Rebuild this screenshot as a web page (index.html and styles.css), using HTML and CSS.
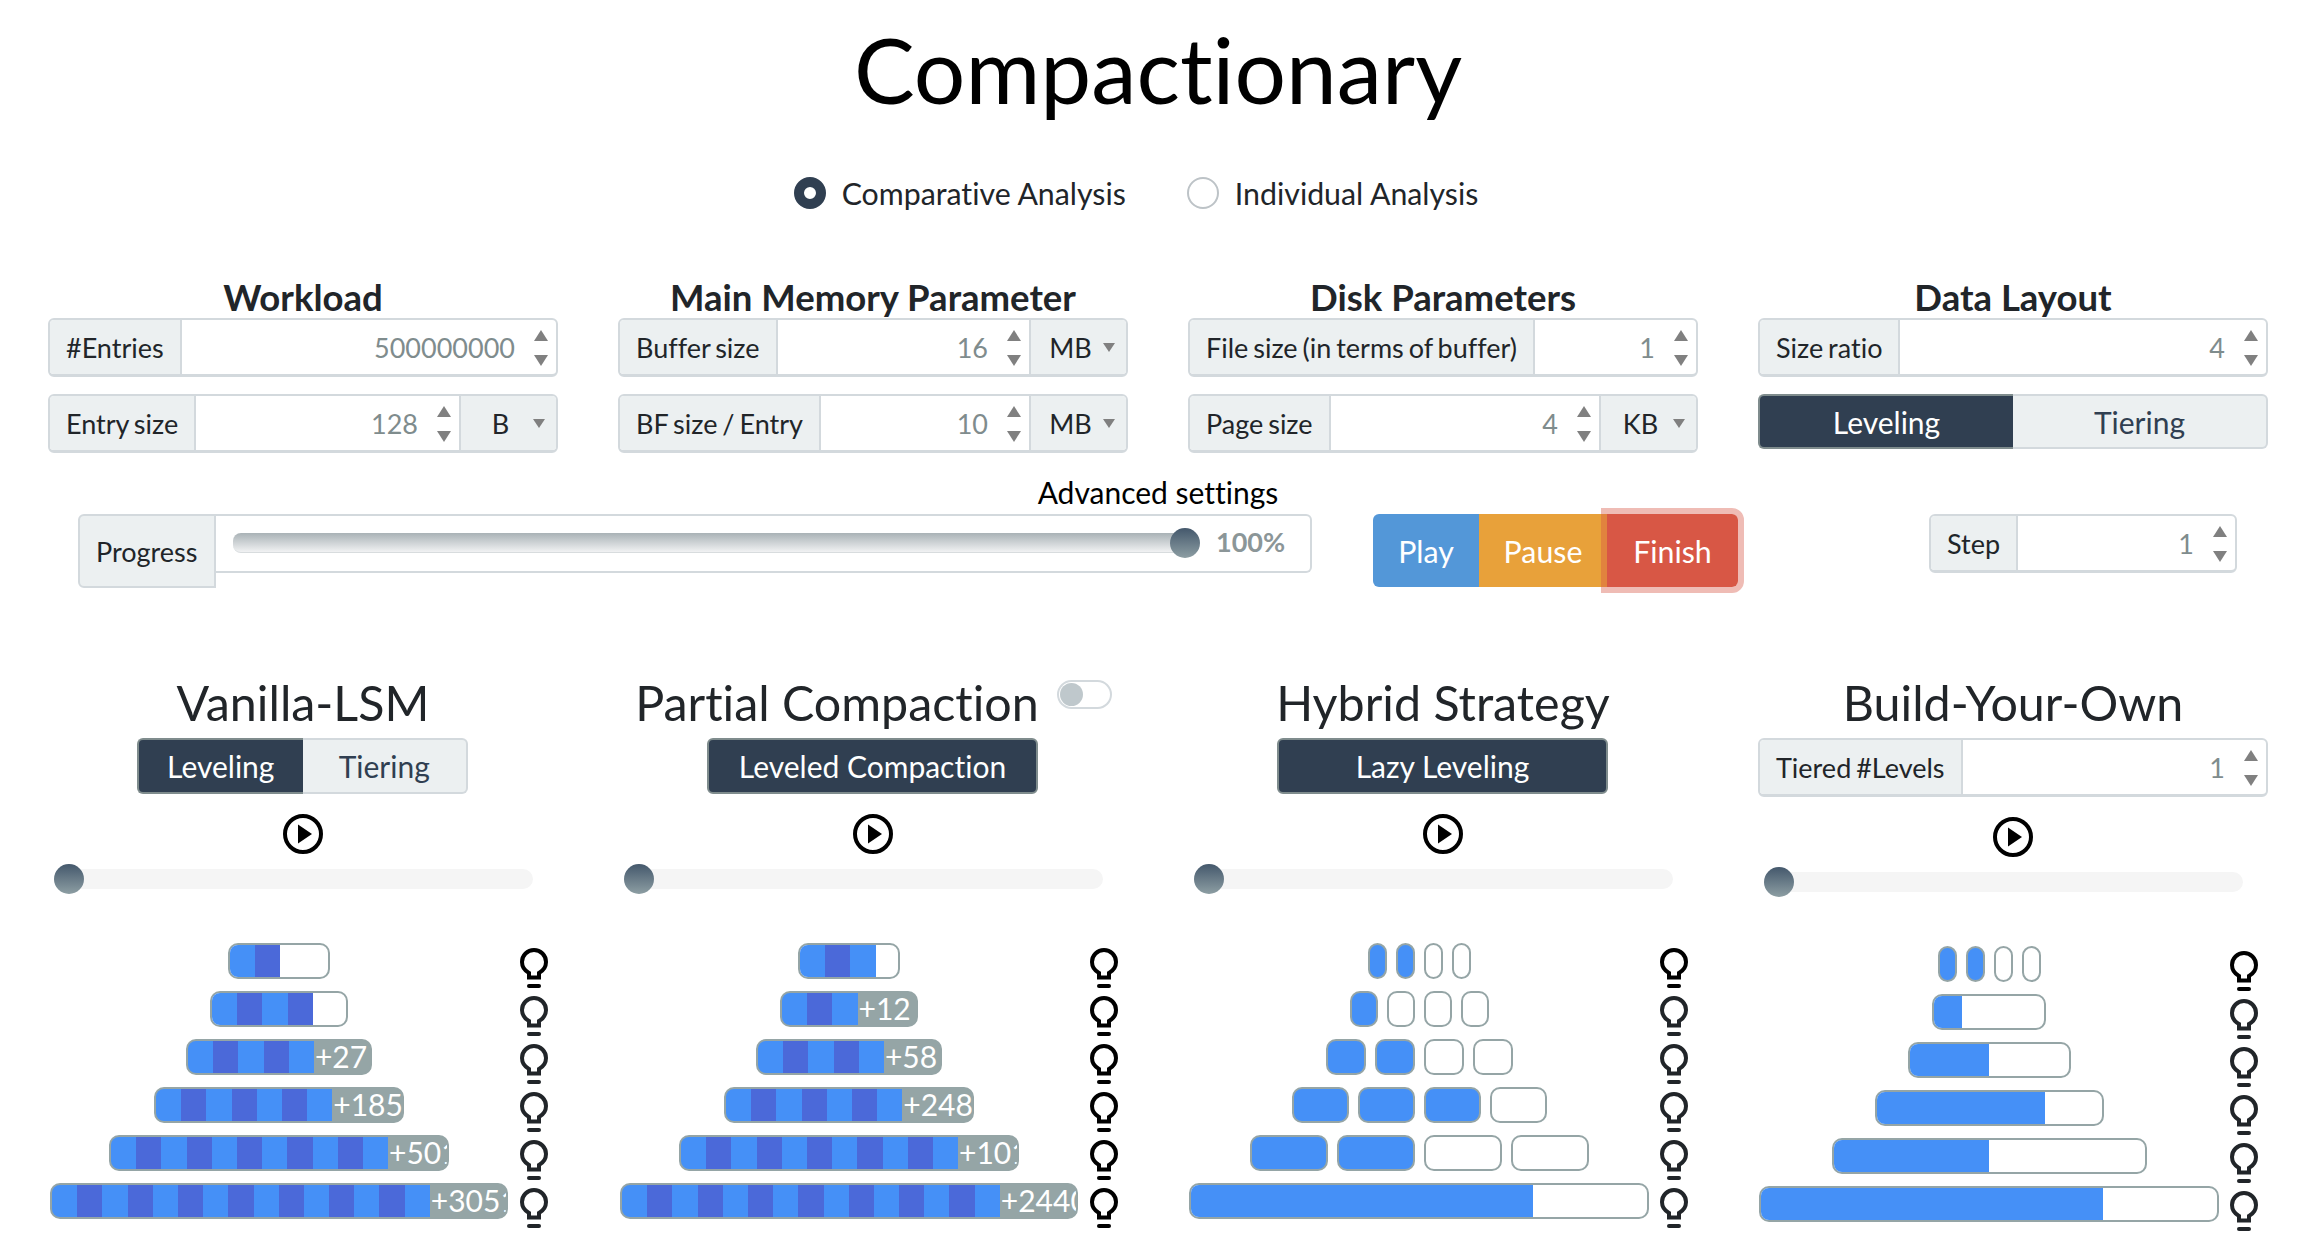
FILE: index.html
```html
<!DOCTYPE html>
<html lang="en">
<head>
  <meta charset="UTF-8">
  <title>Compactionary</title>
  <link rel="stylesheet" href="styles.css">
</head>
<body>
  <svg class="defs" width="0" height="0">
    <symbol id="bulb" viewBox="0 0 28 40">
      <path d="M9 29.5V25C4.5 22.5 2 18.500 2 14a12 12 0 0 1 24 0c0 4.500-2.500 8.500-7 11v4.500z" fill="none" stroke="currentColor" stroke-width="4"/>
      <path d="M9 38h10" fill="none" stroke="currentColor" stroke-width="4" stroke-linecap="round"/>
    </symbol>
    <symbol id="play" viewBox="0 0 40 40">
      <circle cx="20" cy="20" r="18" fill="none" stroke="currentColor" stroke-width="4"/>
      <path d="M15 10.500 29 20 15 29.500z" fill="currentColor"/>
    </symbol>
  </svg>

  <h1 class="title">Compactionary</h1>

  <div class="modes">
    <label class="mode"><span class="radio on"></span>Comparative Analysis</label>
    <label class="mode"><span class="radio"></span>Individual Analysis</label>
  </div>

  <!-- parameters -->
  <div class="grid params">
    <section class="col">
      <h3>Workload</h3>
      <div class="group">
        <span class="addon">#Entries</span>
        <div class="num">500000000</div>
        <span class="spin"></span>
      </div>
      <div class="group">
        <span class="addon">Entry size</span>
        <div class="num">128</div>
        <span class="spin"></span>
        <span class="unit">B</span>
      </div>
    </section>
    <section class="col">
      <h3>Main Memory Parameter</h3>
      <div class="group">
        <span class="addon">Buffer size</span>
        <div class="num">16</div>
        <span class="spin"></span>
        <span class="unit">MB</span>
      </div>
      <div class="group">
        <span class="addon">BF size / Entry</span>
        <div class="num">10</div>
        <span class="spin"></span>
        <span class="unit">MB</span>
      </div>
    </section>
    <section class="col">
      <h3>Disk Parameters</h3>
      <div class="group">
        <span class="addon">File size (in terms of buffer)</span>
        <div class="num">1</div>
        <span class="spin"></span>
      </div>
      <div class="group">
        <span class="addon">Page size</span>
        <div class="num">4</div>
        <span class="spin"></span>
        <span class="unit">KB</span>
      </div>
    </section>
    <section class="col">
      <h3>Data Layout</h3>
      <div class="group">
        <span class="addon">Size ratio</span>
        <div class="num">4</div>
        <span class="spin"></span>
      </div>
      <div class="toggle wide">
        <button class="active">Leveling</button>
        <button>Tiering</button>
      </div>
    </section>
  </div>

  <div class="advanced-title">Advanced settings</div>

  <div class="advanced">
    <div class="progress">
      <span class="addon progress-label">Progress</span>
      <div class="progress-body">
        <div class="progress-track"><span class="progress-thumb"></span></div>
        <span class="percent">100%</span>
      </div>
    </div>
    <div class="actions">
      <button class="play">Play</button>
      <button class="pause">Pause</button>
      <button class="finish">Finish</button>
    </div>
    <div class="group step">
      <span class="addon">Step</span>
      <div class="num">1</div>
      <span class="spin"></span>
    </div>
  </div>

  <!-- strategies -->
  <div class="grid cards">
    <section class="col">
      <h2>Vanilla-LSM</h2>
      <div class="toggle">
        <button class="active">Leveling</button>
        <button>Tiering</button>
      </div>
      <svg class="play-icon"><use href="#play"/></svg>
      <div class="slider"><span class="slider-thumb"></span></div>
      <div class="tree">
        <div class="level"><div class="slot"><div class="bar w1"><i></i><i></i></div></div><svg class="bulb lit"><use href="#bulb"/></svg></div>
        <div class="level"><div class="slot"><div class="bar w2"><i></i><i></i><i></i><i></i></div></div><svg class="bulb"><use href="#bulb"/></svg></div>
        <div class="level"><div class="slot"><div class="bar w3 more"><i></i><i></i><i></i><i></i><i></i><b>+27</b></div></div><svg class="bulb"><use href="#bulb"/></svg></div>
        <div class="level"><div class="slot"><div class="bar w4 more"><i></i><i></i><i></i><i></i><i></i><i></i><i></i><b>+185</b></div></div><svg class="bulb"><use href="#bulb"/></svg></div>
        <div class="level"><div class="slot"><div class="bar w5 more"><i></i><i></i><i></i><i></i><i></i><i></i><i></i><i></i><i></i><i></i><i></i><b>+501</b></div></div><svg class="bulb"><use href="#bulb"/></svg></div>
        <div class="level"><div class="slot"><div class="bar w6 more"><i></i><i></i><i></i><i></i><i></i><i></i><i></i><i></i><i></i><i></i><i></i><i></i><i></i><i></i><i></i><b>+3051</b></div></div><svg class="bulb"><use href="#bulb"/></svg></div>
      </div>
    </section>

    <section class="col">
      <h2 class="with-switch">Partial Compaction<span class="switch"></span></h2>
      <div class="toggle"><button class="active">Leveled Compaction</button></div>
      <svg class="play-icon"><use href="#play"/></svg>
      <div class="slider"><span class="slider-thumb"></span></div>
      <div class="tree">
        <div class="level"><div class="slot"><div class="bar w1"><i></i><i></i><i></i></div></div><svg class="bulb lit"><use href="#bulb"/></svg></div>
        <div class="level"><div class="slot"><div class="bar w2 more"><i></i><i></i><i></i><b>+12</b></div></div><svg class="bulb lit"><use href="#bulb"/></svg></div>
        <div class="level"><div class="slot"><div class="bar w3 more"><i></i><i></i><i></i><i></i><i></i><b>+58</b></div></div><svg class="bulb lit"><use href="#bulb"/></svg></div>
        <div class="level"><div class="slot"><div class="bar w4 more"><i></i><i></i><i></i><i></i><i></i><i></i><i></i><b>+248</b></div></div><svg class="bulb lit"><use href="#bulb"/></svg></div>
        <div class="level"><div class="slot"><div class="bar w5 more"><i></i><i></i><i></i><i></i><i></i><i></i><i></i><i></i><i></i><i></i><i></i><b>+101</b></div></div><svg class="bulb lit"><use href="#bulb"/></svg></div>
        <div class="level"><div class="slot"><div class="bar w6 more"><i></i><i></i><i></i><i></i><i></i><i></i><i></i><i></i><i></i><i></i><i></i><i></i><i></i><i></i><i></i><b>+2440</b></div></div><svg class="bulb lit"><use href="#bulb"/></svg></div>
      </div>
    </section>

    <section class="col">
      <h2>Hybrid Strategy</h2>
      <div class="toggle"><button class="active">Lazy Leveling</button></div>
      <svg class="play-icon"><use href="#play"/></svg>
      <div class="slider"><span class="slider-thumb"></span></div>
      <div class="tree">
        <div class="level"><div class="slot runs r1"><u class="full"></u><u class="full"></u><u></u><u></u></div><svg class="bulb lit"><use href="#bulb"/></svg></div>
        <div class="level"><div class="slot runs r2"><u class="full"></u><u></u><u></u><u></u></div><svg class="bulb"><use href="#bulb"/></svg></div>
        <div class="level"><div class="slot runs r3"><u class="full"></u><u class="full"></u><u></u><u></u></div><svg class="bulb"><use href="#bulb"/></svg></div>
        <div class="level"><div class="slot runs r4"><u class="full"></u><u class="full"></u><u class="full"></u><u></u></div><svg class="bulb"><use href="#bulb"/></svg></div>
        <div class="level"><div class="slot runs r5"><u class="full"></u><u class="full"></u><u></u><u></u></div><svg class="bulb"><use href="#bulb"/></svg></div>
        <div class="level"><div class="slot"><div class="bar w6"><em style="width: 75%"></em></div></div><svg class="bulb"><use href="#bulb"/></svg></div>
      </div>
    </section>

    <section class="col">
      <h2>Build-Your-Own</h2>
      <div class="group tiered">
        <span class="addon">Tiered #Levels</span>
        <div class="num">1</div>
        <span class="spin"></span>
      </div>
      <svg class="play-icon"><use href="#play"/></svg>
      <div class="slider"><span class="slider-thumb"></span></div>
      <div class="tree">
        <div class="level"><div class="slot runs r1"><u class="full"></u><u class="full"></u><u></u><u></u></div><svg class="bulb lit"><use href="#bulb"/></svg></div>
        <div class="level"><div class="slot"><div class="bar b2"><em style="width: 25%"></em></div></div><svg class="bulb"><use href="#bulb"/></svg></div>
        <div class="level"><div class="slot"><div class="bar b3"><em style="width: 50%"></em></div></div><svg class="bulb"><use href="#bulb"/></svg></div>
        <div class="level"><div class="slot"><div class="bar b4"><em style="width: 75%"></em></div></div><svg class="bulb"><use href="#bulb"/></svg></div>
        <div class="level"><div class="slot"><div class="bar b5"><em style="width: 50%"></em></div></div><svg class="bulb"><use href="#bulb"/></svg></div>
        <div class="level"><div class="slot"><div class="bar w6"><em style="width: 75%"></em></div></div><svg class="bulb"><use href="#bulb"/></svg></div>
      </div>
    </section>
  </div>
</body>
</html>
```

FILE: styles.css
```css
* {
  box-sizing: border-box;
}
body {
  margin: 0;
  padding: 0 48px;
  height: 1252px;
  overflow: hidden;
  font-family: "Lato", "Open Sans", sans-serif;
  font-size: 27px;
  font-variant-ligatures: none;
  color: #212529;
  background-color: white;
}
.defs {
  position: absolute;
}
button {
  font: inherit;
  font-variant-ligatures: none;
  border: none;
  cursor: pointer;
}

.title {
  margin: 0;
  height: 146px;
  line-height: 138px;
  text-align: center;
  font-size: 91px;
  font-weight: 400;
  color: #000;
}

.modes {
  display: flex;
  justify-content: center;
  gap: 61px;
  height: 132px;
  padding-top: 26px;
  padding-right: 44px;
}
.mode {
  display: flex;
  align-items: center;
  gap: 16px;
  height: 42px;
  font-size: 30.3px;
}
.radio {
  width: 32px;
  height: 32px;
  border: 2px solid #bdc3c7;
  border-radius: 50%;
}
.radio.on {
  border: 10px solid #303f51;
}

.grid {
  display: grid;
  grid-template-columns: repeat(4, 510px);
  column-gap: 60px;
}
.params {
  height: 195px;
  align-content: start;
}
.col {
  position: relative;
  min-width: 0;
}
h3 {
  margin: 0;
  height: 40px;
  line-height: 38px;
  text-align: center;
  font-size: 36.5px;
  font-weight: 700;
}

/* input groups */
.group {
  display: flex;
  height: 59px;
  border: 2px solid #d3d9dd;
  border-bottom-width: 3px;
  border-radius: 6px;
  margin-bottom: 17px;
  background: white;
  overflow: hidden;
}
.addon {
  flex: none;
  display: flex;
  align-items: center;
  padding: 0 16px;
  background: #ecf0f1;
  border-right: 2px solid #d3d9dd;
  word-spacing: -2px;
}
.num {
  flex: 1;
  min-width: 0;
  display: flex;
  align-items: center;
  justify-content: flex-end;
  padding-right: 16px;
  color: #7f8c8d;
}
.spin {
  flex: none;
  position: relative;
  width: 25px;
}
.spin::before,
.spin::after {
  content: "";
  position: absolute;
  left: 3px;
  border-left: 7px solid transparent;
  border-right: 7px solid transparent;
}
.spin::before {
  top: 10px;
  border-bottom: 11px solid #808080;
}
.spin::after {
  top: 35px;
  border-top: 11px solid #808080;
}
.unit {
  flex: none;
  position: relative;
  display: flex;
  align-items: center;
  justify-content: center;
  width: 99px;
  margin-right: -2px;
  padding-right: 18px;
  background: #ecf0f1;
  border-left: 2px solid #d3d9dd;
}
.unit::after {
  content: "";
  position: absolute;
  right: 13px;
  top: 23px;
  border-left: 6px solid transparent;
  border-right: 6px solid transparent;
  border-top: 9px solid #808080;
}

/* toggles */
.toggle {
  display: flex;
  width: 331px;
  height: 56px;
  margin-left: 89px;
  font-size: 30px;
}
.toggle.wide {
  width: 100%;
  height: 55px;
  margin-left: 0;
}
.toggle button {
  flex: 1;
  padding: 0;
  color: #303f51;
  background: #ecf0f1;
  border: 2px solid #d3d9dd;
  border-left: none;
  border-radius: 0 6px 6px 0;
}
.toggle button.active {
  color: white;
  background: #303f51;
  border: 2px solid #7f8c8d;
  border-right: none;
  border-radius: 6px 0 0 6px;
}
.toggle button.active:only-child {
  border-right: 2px solid #7f8c8d;
  border-radius: 6px;
}

.advanced-title {
  height: 41px;
  line-height: 38px;
  text-align: center;
  font-size: 30px;
  color: #000;
}
.advanced {
  display: flex;
  align-items: flex-start;
  height: 162px;
  padding-left: 30px;
}
.progress {
  display: flex;
  align-items: flex-start;
  width: 1234px;
}
.progress-label {
  width: 138px;
  height: 74px;
  border: 2px solid #d3d9dd;
  border-right-width: 2px;
  border-radius: 6px 0 0 6px;
}
.progress-body {
  flex: 1;
  display: flex;
  align-items: center;
  height: 59px;
  padding-left: 17px;
  border: 2px solid #d3d9dd;
  border-left: none;
  border-radius: 0 6px 6px 0;
}
.progress-track {
  position: relative;
  width: 956px;
  height: 20px;
  margin-top: -2px;
  border-radius: 8px;
  background: linear-gradient(#a9b2b6, #f1f2f3);
  border-bottom: 1px solid #d8dcde;
}
.progress-thumb,
.slider-thumb {
  position: absolute;
  top: -5px;
  width: 30px;
  height: 30px;
  border-radius: 50%;
  background: linear-gradient(#44586c, #8d9ea3);
}
.progress-thumb {
  right: -11px;
}
.percent {
  margin: -4px 0 0 27px;
  font-weight: 700;
  color: #8b9698;
}
.actions {
  display: flex;
  height: 73px;
  margin-left: 61px;
  font-size: 30.3px;
}
.actions button {
  color: white;
  padding: 0;
}
.play {
  width: 106px;
  background: #5397d8;
  border-radius: 6px 0 0 6px;
}
.pause {
  width: 128px;
  background: #e8a13a;
}
.finish {
  width: 131px;
  background: #d85745;
  border-radius: 0 6px 6px 0;
  outline: 6px solid rgba(216, 87, 69, 0.4);
}
.step {
  width: 308px;
  margin-left: 191px;
}

/* strategy cards */
.cards {
  align-items: start;
}
h2 {
  margin: 0;
  height: 62px;
  line-height: 52px;
  text-align: center;
  font-size: 48.4px;
  font-weight: 400;
}
.with-switch {
  padding-right: 72px;
}
.switch {
  position: absolute;
  left: 439px;
  top: 4px;
  width: 55px;
  height: 29px;
  border: 2px solid #d3d9dd;
  border-radius: 15px;
  background: white;
}
.switch::before {
  content: "";
  display: block;
  width: 23px;
  height: 23px;
  margin: 1px;
  border-radius: 50%;
  background: #bfc8cc;
}
.tiered {
  margin-bottom: 1px;
}
.play-icon {
  display: block;
  width: 40px;
  height: 40px;
  margin: 20px auto 0;
  color: #000;
}
.slider {
  position: relative;
  width: 479px;
  height: 20px;
  margin: 15px 0 0 6px;
  border-radius: 10px;
  background: #f5f5f5;
}
.slider-thumb {
  left: 0;
}

.tree {
  display: flex;
  flex-direction: column;
  gap: 12px;
  margin-top: 54px;
}
.level {
  display: flex;
  align-items: flex-start;
  height: 36px;
}
.slot {
  flex: none;
  display: flex;
  justify-content: center;
  width: 462px;
}
.bulb {
  flex: none;
  width: 28px;
  height: 40px;
  margin: 5px 0 0 10px;
  color: #212529;
}
.bulb.lit {
  color: #000;
  filter: blur(0.5px);
}

.bar {
  display: flex;
  height: 36px;
  border: 2px solid #95a5a6;
  border-radius: 10px;
  background: white;
  overflow: hidden;
}
.bar.more {
  background: #95a5a6;
}
.bar i {
  flex: none;
  width: 25.2px;
  background: #4590f7;
}
.bar i:nth-child(even) {
  background: #4b69d9;
}
.bar b {
  flex: 1;
  min-width: 0;
  padding-left: 1px;
  overflow: hidden;
  white-space: nowrap;
  line-height: 30px;
  font-size: 30px;
  font-weight: 400;
  color: white;
}
.bar em {
  display: block;
  background: #4590f7;
}
.w1 { width: 102px; }
.w2 { width: 138px; }
.w3 { width: 186px; }
.w4 { width: 250px; }
.w5 { width: 340px; }
.w6 { width: 458px; }
.w6:not(.more) { width: 460px; }
.b2 { width: 114px; }
.b3 { width: 163px; }
.b4 { width: 229px; }
.b5 { width: 315px; }

.runs {
  gap: 9px;
}
.runs u {
  display: block;
  height: 36px;
  border: 2px solid #95a5a6;
  border-radius: 10px;
  background: white;
}
.runs u.full {
  background: #4590f7;
}
.r1 u { width: 19px; }
.r2 u { width: 28px; }
.r3 u { width: 40px; }
.r4 u { width: 57px; }
.r5 u { width: 78px; }
```
